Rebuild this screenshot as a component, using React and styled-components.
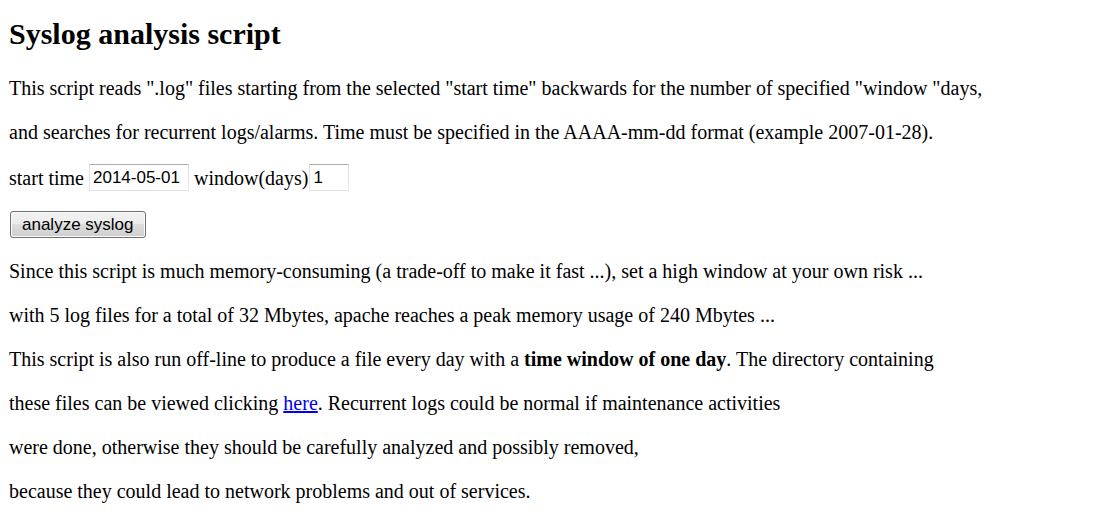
import React from "react";
import styled, { createGlobalStyle } from "styled-components";

const GlobalStyle = createGlobalStyle`
  body {
    margin: 0;
    background: #fff;
    color: #000;
    font-family: "Liberation Serif", "Times New Roman", serif;
    font-size: 20px;
    line-height: 24px;
  }
`;

const Page = styled.main`
  padding: 17px 9px 18px;
`;

const Title = styled.h1`
  margin: 0 0 25px;
  font-size: 30px;
  line-height: 34px;
  font-weight: bold;
`;

const Line = styled.p`
  margin: 0 0 20px;
`;

const Form = styled.form`
  margin: 0 0 21px;
`;

const Fields = styled.div`
  display: flex;
  align-items: center;
  margin-bottom: 20px;
`;

const Label = styled.label`
  margin-right: ${(p) => p.$gap || 0}px;
`;

const TextInput = styled.input`
  box-sizing: border-box;
  width: ${(p) => p.$width}px;
  height: 27px;
  margin: 0 ${(p) => p.$gap || 0}px 0 0;
  padding: 1px 3px 0;
  border: 1px solid #e2e3ea;
  border-top-color: #abadb3;
  border-radius: 0;
  background: #fff;
  color: #000;
  font: 17px "Liberation Sans", Arial, sans-serif;
`;

const Button = styled.button`
  display: block;
  box-sizing: border-box;
  height: 27px;
  margin: 0 1px;
  padding: 1px 11px 0;
  border: 1px solid #707070;
  border-radius: 3px;
  background: linear-gradient(#f2f2f2 0%, #ebebeb 50%, #dddddd 50%, #cfcfcf 100%);
  box-shadow: inset 0 0 0 1px #fbfbfb;
  color: #000;
  font: 17px "Liberation Sans", Arial, sans-serif;
`;

const Link = styled.a`
  color: #0000ee;
  text-decoration: underline;
`;

export default function App() {
  return (
    <>
      <GlobalStyle />
      <Page>
        <Title>Syslog analysis script</Title>
        <Line>
          This script reads ".log" files starting from the selected "start time"
          backwards for the number of specified "window "days,
        </Line>
        <Line>
          and searches for recurrent logs/alarms. Time must be specified in the
          AAAA-mm-dd format (example 2007-01-28).
        </Line>
        <Form onSubmit={(e) => e.preventDefault()}>
          <Fields>
            <Label htmlFor="start" $gap={5}>start time</Label>
            <TextInput id="start" type="text" defaultValue="2014-05-01" $width={100} $gap={5} />
            <Label htmlFor="days" $gap={1}>window(days)</Label>
            <TextInput id="days" type="text" defaultValue="1" $width={40} />
          </Fields>
          <Button type="submit">analyze syslog</Button>
        </Form>
        <Line>
          Since this script is much memory-consuming (a trade-off to make it
          fast ...), set a high window at your own risk ...
        </Line>
        <Line>
          with 5 log files for a total of 32 Mbytes, apache reaches a peak
          memory usage of 240 Mbytes ...
        </Line>
        <Line>
          This script is also run off-line to produce a file every day with a{" "}
          <b>time window of one day</b>. The directory containing
        </Line>
        <Line>
          these files can be viewed clicking <Link href="#files">here</Link>.
          Recurrent logs could be normal if maintenance activities
        </Line>
        <Line>
          were done, otherwise they should be carefully analyzed and possibly
          removed,
        </Line>
        <Line>because they could lead to network problems and out of services.</Line>
      </Page>
    </>
  );
}
